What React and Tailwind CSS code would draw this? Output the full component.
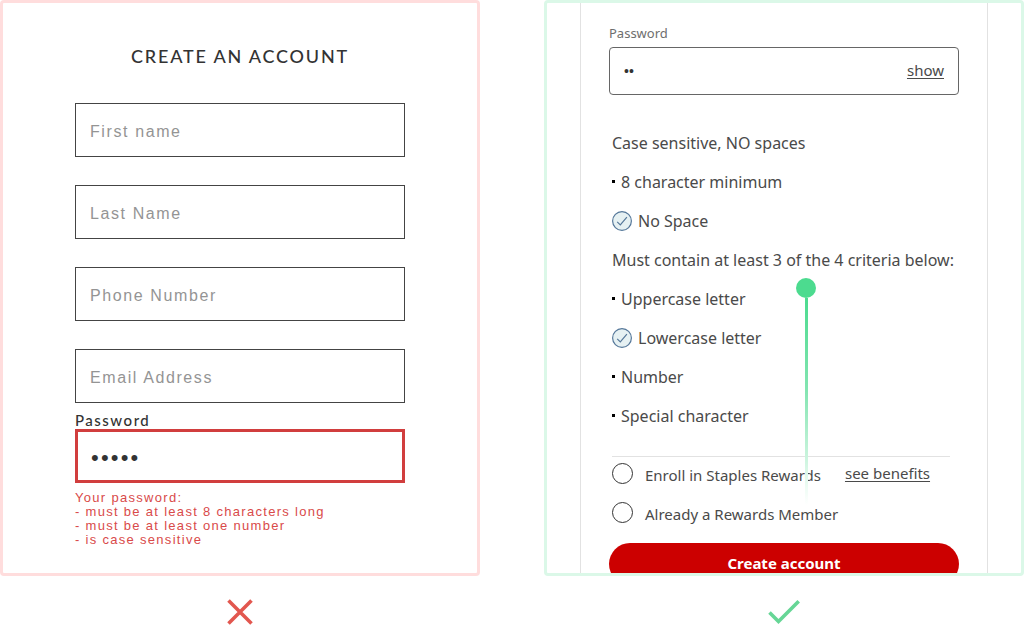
import React from "react";

const fields = [
  { id: "first-name", label: "First name", type: "text" },
  { id: "last-name", label: "Last Name", type: "text" },
  { id: "phone", label: "Phone Number", type: "tel" },
  { id: "email", label: "Email Address", type: "email" },
];

const criteria = [
  { text: "Case sensitive, NO spaces", kind: "heading" },
  { text: "8 character minimum", kind: "open" },
  { text: "No Space", kind: "met" },
  { text: "Must contain at least 3 of the 4 criteria below:", kind: "heading" },
  { text: "Uppercase letter", kind: "open" },
  { text: "Lowercase letter", kind: "met" },
  { text: "Number", kind: "open" },
  { text: "Special character", kind: "open" },
];

function MetIcon() {
  return (
    <svg width="20" height="20" viewBox="0 0 20 20" fill="none" className="shrink-0" aria-hidden="true">
      <circle cx="10" cy="10" r="9.4" fill="#e6f1f3" stroke="#56789a" strokeWidth="1.2" />
      <path d="M5.2 10.9 8.3 13.9 14.9 6.2" stroke="#56789a" strokeWidth="1.2" />
    </svg>
  );
}

function Criterion({ text, kind }) {
  return (
    <li className="flex h-[39px] items-center">
      {kind === "open" && <span className="mr-[6px] size-[3px] shrink-0 bg-black" />}
      {kind === "met" && <span className="mr-[6px]"><MetIcon /></span>}
      <span>{text}</span>
    </li>
  );
}

function RewardOption({ id, label, children }) {
  return (
    <div className="flex h-9 items-center">
      <input
        type="radio"
        name="rewards"
        id={id}
        className="mb-[3px] size-[21px] shrink-0 appearance-none rounded-full border border-[#333] bg-white checked:border-[6px]"
      />
      <label htmlFor={id} className="ml-3">{label}</label>
      {children}
    </div>
  );
}

function BadForm() {
  return (
    <form className="flex grow flex-col rounded border-[3px] border-[#ffdddd] bg-white pt-[39px] pb-6 font-['Liberation_Sans',sans-serif]">
      <div className="mx-auto w-full max-w-[330px]">
        <h2 className="text-center font-[Lato,sans-serif] text-[18px] leading-7 font-medium tracking-widest text-[#333]">
          CREATE AN ACCOUNT
        </h2>
        <div className="mt-[33px] flex flex-col gap-7">
          {fields.map((f) => (
            <input
              key={f.id}
              id={f.id}
              type={f.type}
              aria-label={f.label}
              placeholder={f.label}
              className="h-[54px] w-full border border-[#444] px-[14px] pt-1 text-[16px] tracking-widest text-[#333] outline-none placeholder:text-[#949494]"
            />
          ))}
        </div>
        <label htmlFor="bad-password" className="block pt-2 font-[Lato,sans-serif] text-[15px] leading-[18px] font-medium tracking-widest text-[#333]">
          Password
        </label>
        <input
          id="bad-password"
          type="password"
          defaultValue="abcde"
          className="block h-[54px] w-full border-[3px] border-[#d13e3e] px-[13px] pt-1 text-[22px] tracking-widest text-[#333] outline-none"
        />
        <div className="mt-2 text-[13px] leading-[14px] tracking-widest text-[#d94a4a]">
          <p>Your password:</p>
          <p>- must be at least 8 characters long</p>
          <p>- must be at least one number</p>
          <p>- is case sensitive</p>
        </div>
      </div>
    </form>
  );
}

function GoodForm() {
  return (
    <form className="flex grow flex-col overflow-hidden rounded border-[3px] border-[#dbf8e8] bg-white font-['Noto_Sans',sans-serif] text-[15px] text-[#4a4a4a]">
      <div className="relative mx-auto w-full max-w-[408px] grow border-x border-[#e2e2e2] px-7 pt-5">
        <label htmlFor="good-password" className="block text-[13px] leading-5 text-[#6e6e6e]">Password</label>
        <div className="mt-1 flex h-12 items-center rounded border border-[#666] px-[14px]">
          <input
            id="good-password"
            type="password"
            defaultValue="ab"
            className="min-w-0 grow font-['Liberation_Sans',sans-serif] text-[14px] text-[#333] outline-none"
          />
          <button type="button" className="pb-0.5 underline underline-offset-2">show</button>
        </div>
        <ul className="mt-7 pl-[3px] text-[16px]">
          {criteria.map((c) => (
            <Criterion key={c.text} {...c} />
          ))}
        </ul>
        <div className="mt-[21px] mr-[9px] ml-[3px] flex flex-col gap-[3px] border-t border-[#e2e2e2]">
          <RewardOption id="enroll" label="Enroll in Staples Rewards">
            <a href="#benefits" className="mb-[3px] ml-6 underline underline-offset-2">see benefits</a>
          </RewardOption>
          <RewardOption id="member" label="Already a Rewards Member" />
        </div>
        <button type="submit" className="mt-[11px] -mb-3 block h-[42px] w-full rounded-full bg-[#cc0000] pb-0.5 font-bold text-white">
          Create account
        </button>
        <div className="pointer-events-none absolute top-[275px] left-[215px] flex flex-col items-center">
          <span className="size-5 rounded-full bg-[#4cdb8f]" />
          <span className="h-[207px] w-[3px] bg-[linear-gradient(to_bottom,#4cdb8f,#84e5b2_45%,#c5f3da_75%,#effcf5_92%,#ffffff00)]" />
        </div>
      </div>
    </form>
  );
}

export default function App() {
  return (
    <main className="grid min-h-screen grid-cols-2 content-start gap-16 bg-white">
      <section className="flex flex-col">
        <BadForm />
        <svg width="26" height="26" viewBox="0 0 26 26" className="mx-auto mt-[23px]" role="img" aria-label="Avoid">
          <path d="M1.5 1.5 24.5 24.5M24.5 1.5 1.5 24.5" stroke="#e2574f" strokeWidth="3.6" fill="none" />
        </svg>
      </section>
      <section className="flex flex-col">
        <GoodForm />
        <svg width="32" height="26" viewBox="0 0 32 26" className="mx-auto mt-[23px]" role="img" aria-label="Prefer">
          <path d="M1.5 13.5 10.5 22.5 30.7 2.2" stroke="#66d696" strokeWidth="3.6" fill="none" />
        </svg>
      </section>
    </main>
  );
}
